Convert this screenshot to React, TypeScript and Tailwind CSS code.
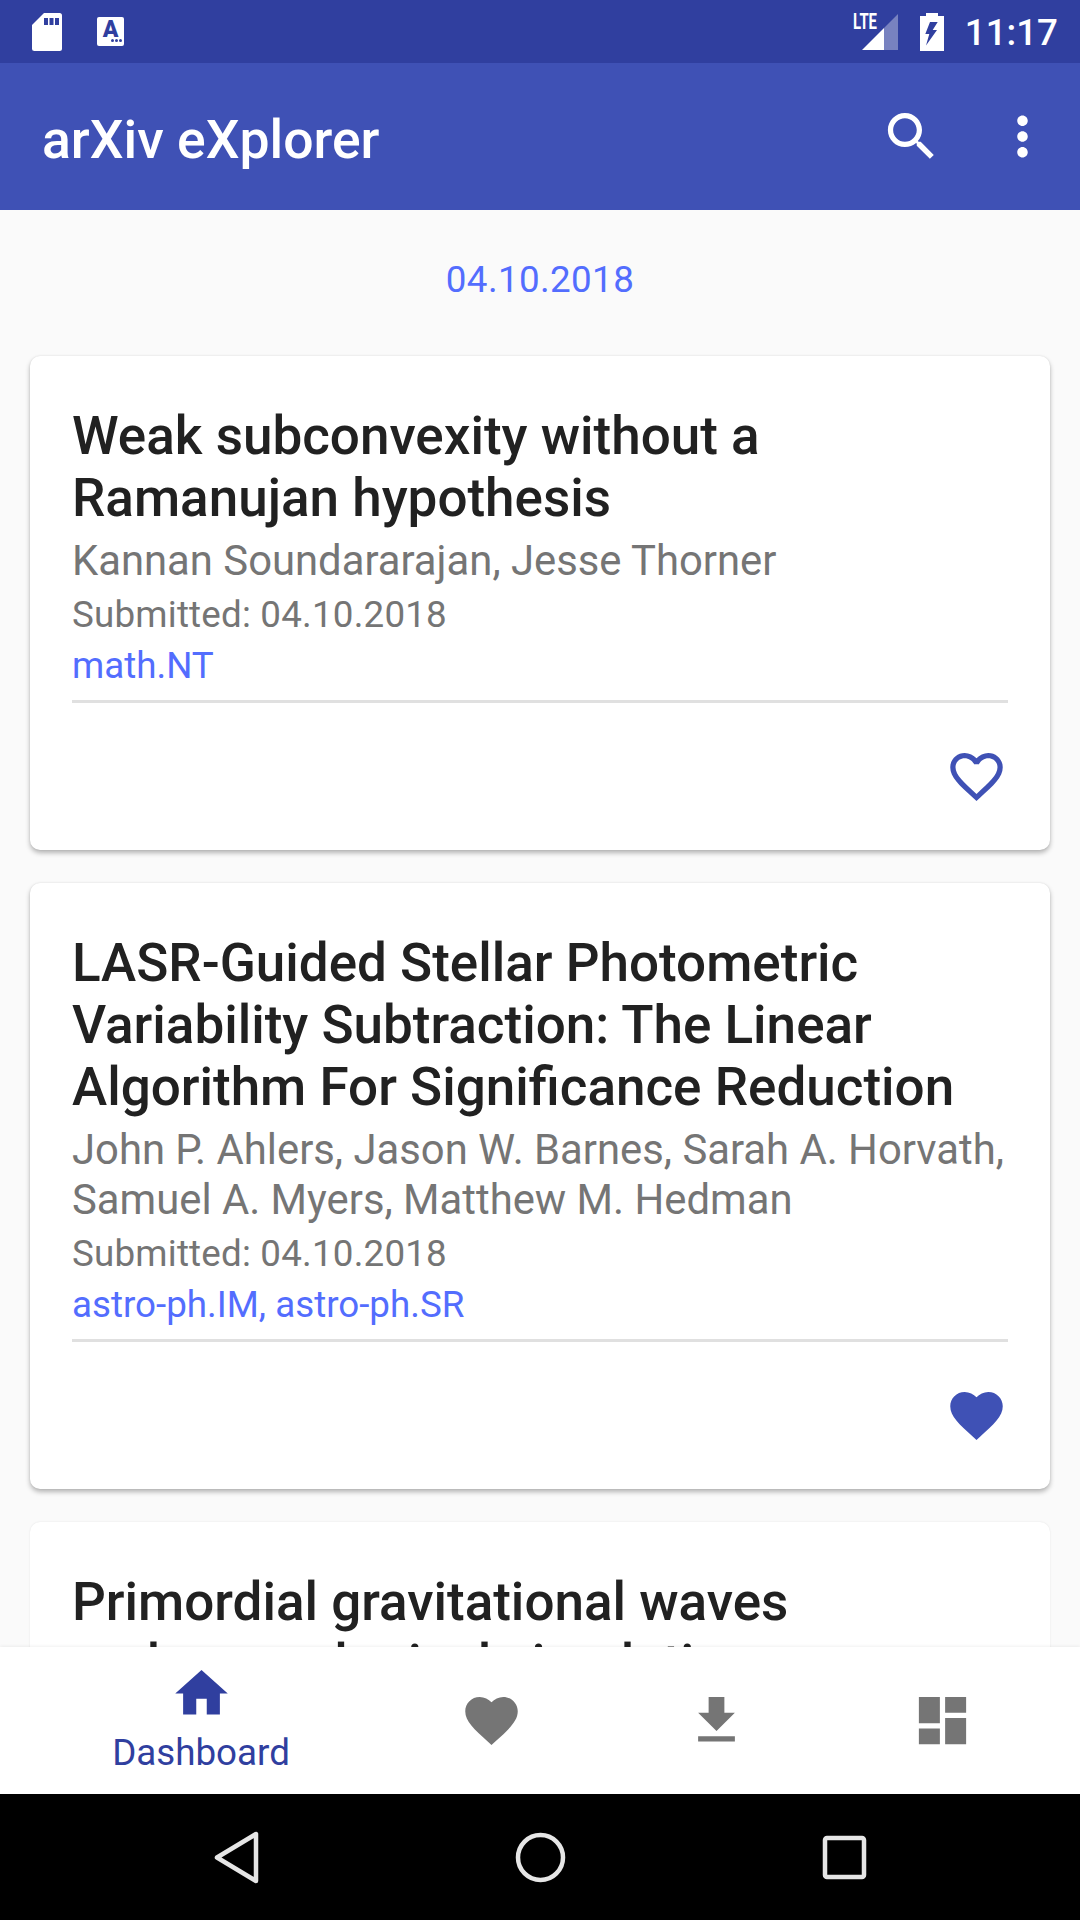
import { Fragment } from 'react';

const cards = [
  {
    title: ['Weak subconvexity without a', 'Ramanujan hypothesis'],
    authors: ['Kannan Soundararajan, Jesse Thorner'],
    categories: 'math.NT',
    liked: false,
  },
  {
    title: ['LASR-Guided Stellar Photometric', 'Variability Subtraction: The Linear', 'Algorithm For Significance Reduction'],
    authors: ['John P. Ahlers, Jason W. Barnes, Sarah A. Horvath,', 'Samuel A. Myers, Matthew M. Hedman'],
    categories: 'astro-ph.IM, astro-ph.SR',
    liked: true,
  },
];

function Icon({ d, className }: { d: string; className: string }) {
  return (
    <svg viewBox="0 0 24 24" className={className} fill="currentColor">
      <path d={d} />
    </svg>
  );
}

const heartFilled =
  'M12 21.35l-1.45-1.32C5.4 15.36 2 12.28 2 8.5 2 5.42 4.42 3 7.5 3c1.74 0 3.41.81 4.5 2.09C13.09 3.81 14.76 3 16.5 3 19.58 3 22 5.42 22 8.5c0 3.78-3.4 6.86-8.55 11.54L12 21.35z';
const heartOutline =
  'M16.5 3c-1.74 0-3.41.81-4.5 2.09C10.91 3.81 9.24 3 7.5 3 4.42 3 2 5.42 2 8.5c0 3.78 3.4 6.86 8.55 11.54L12 21.35l1.45-1.32C18.6 15.36 22 12.28 22 8.5 22 5.42 19.58 3 16.5 3zm-4.4 15.55l-.1.1-.1-.1C7.14 14.24 4 11.39 4 8.5 4 6.5 5.5 5 7.5 5c1.54 0 3.04.99 3.57 2.36h1.87C13.46 5.99 14.96 5 16.5 5c2 0 3.5 1.5 3.5 3.5 0 2.89-3.14 5.74-7.9 10.05z';

function StatusBar() {
  return (
    <div className="flex h-[63px] shrink-0 items-center bg-[#303f9f] pl-[32px] pr-[22px] text-white">
      <svg viewBox="0 0 30 38" className="h-[38px] w-[30px]">
        <path d="M12 0h15.5A2.5 2.5 0 0 1 30 2.5v33a2.5 2.5 0 0 1-2.5 2.5h-25A2.5 2.5 0 0 1 0 35.5V12z" fill="#fff" />
        <rect x="12" y="5" width="4" height="7" fill="#303f9f" />
        <rect x="17.5" y="5" width="4" height="7" fill="#303f9f" />
        <rect x="23" y="5" width="4" height="7" fill="#303f9f" />
      </svg>
      <div className="ml-[35px] flex h-[29px] w-[27px] flex-col items-center rounded-[2px] bg-white text-[#303f9f]">
        <span className="mt-[3px] text-[23px] leading-[19px] font-black">A</span>
        <span className="ml-[11px] flex gap-[1px]">
          <i className="h-[3px] w-[3px] rounded-full bg-[#303f9f]" />
          <i className="h-[3px] w-[3px] rounded-full bg-[#303f9f]" />
          <i className="h-[3px] w-[3px] rounded-full bg-[#303f9f]" />
        </span>
      </div>
      <svg viewBox="0 0 46 38" className="ml-auto h-[38px] w-[46px] overflow-visible">
        <text x="1" y="16" fontSize="22" fontWeight="700" fill="#fff" textLength="24" lengthAdjust="spacingAndGlyphs">
          LTE
        </text>
        <path d="M10 37 32 15v22z" fill="#fff" />
        <path d="M32 15 46 1v36H32z" fill="#fff" fillOpacity="0.35" />
      </svg>
      <svg viewBox="0 0 24 38" className="ml-[22px] h-[38px] w-[24px]">
        <path d="M6 0h12v3h6v35H0V3h6z" fill="#fff" />
        <path d="M10 9h7.7l-5 8H17L6 32.5 9.3 21H5.3z" fill="#303f9f" />
      </svg>
      <span className="mt-[4px] ml-[21px] text-[36.75px] leading-none font-medium">11:17</span>
    </div>
  );
}

function AppBar() {
  return (
    <div className="flex h-[147px] shrink-0 items-center bg-[#3f51b5] pl-[42px] text-white">
      <h1 className="mt-[6px] text-[53.5px] leading-none font-medium">arXiv eXplorer</h1>
      <Icon
        className="ml-auto h-[63px] w-[63px]"
        d="M15.5 14h-.79l-.28-.27C15.41 12.59 16 11.11 16 9.5 16 5.91 13.09 3 9.5 3S3 5.91 3 9.5 5.91 16 9.5 16c1.61 0 3.09-.59 4.23-1.57l.27.28v.79l5 4.99L20.49 19l-4.99-5zm-6 0C7.01 14 5 11.99 5 9.5S7.01 5 9.5 5 14 7.01 14 9.5 11.99 14 9.5 14z"
      />
      <Icon
        className="mr-[26px] ml-[48px] h-[63px] w-[63px]"
        d="M12 8c1.1 0 2-.9 2-2s-.9-2-2-2-2 .9-2 2 .9 2 2 2zm0 2c-1.1 0-2 .9-2 2s.9 2 2 2 2-.9 2-2-.9-2-2-2zm0 6c-1.1 0-2 .9-2 2s.9 2 2 2 2-.9 2-2-.9-2-2-2z"
      />
    </div>
  );
}

function PaperCard({ card }: { card: (typeof cards)[number] }) {
  return (
    <div className="mb-[33px] rounded-[10px] bg-white px-[42px] pt-[49px] pb-[42px] shadow-[0_3px_5px_rgba(0,0,0,0.28),0_0_2px_rgba(0,0,0,0.1)]">
      <h2 className="mb-[7px] text-[53px] leading-[62px] font-medium whitespace-nowrap text-[#212121]">
        {card.title.map((line) => (
          <Fragment key={line}>
            {line}
            <br />
          </Fragment>
        ))}
      </h2>
      <p className="text-[41.8px] leading-[50px] whitespace-nowrap text-[#757575]">
        {card.authors.map((line) => (
          <Fragment key={line}>
            {line}
            <br />
          </Fragment>
        ))}
      </p>
      <p className="mt-[4px] text-[36.75px] leading-[49px] tracking-[0.2px] text-[#757575]">Submitted: 04.10.2018</p>
      <p className="mt-[5px] text-[36.75px] leading-[43px] text-[#536dfe]">{card.categories}</p>
      <div className="mt-[13px] h-[3px] bg-[#e0e0e0]" />
      <div className="mt-[42px] flex justify-end">
        <Icon className="h-[63px] w-[63px] text-[#3f51b5]" d={card.liked ? heartFilled : heartOutline} />
      </div>
    </div>
  );
}

function BottomNav() {
  return (
    <div className="z-10 grid h-[147px] shrink-0 grid-cols-[356px_1fr_1fr_1fr] bg-white pr-[25px] pl-[23px] text-[#757575] shadow-[0_-1px_3px_rgba(0,0,0,0.06)]">
      <div className="flex flex-col items-center pt-[15px] text-[#303f9f]">
        <Icon className="h-[63px] w-[63px]" d="M10 20v-6h4v6h5v-8h3L12 3 2 12h3v8z" />
        <span className="mt-[6px] text-[36.75px] leading-[43px]">Dashboard</span>
      </div>
      <div className="flex items-center justify-center">
        <Icon className="h-[63px] w-[63px]" d={heartFilled} />
      </div>
      <div className="flex items-center justify-center">
        <Icon className="h-[63px] w-[63px]" d="M19 9h-4V3H9v6H5l7 7 7-7zM5 18v2h14v-2H5z" />
      </div>
      <div className="flex items-center justify-center">
        <Icon className="h-[63px] w-[63px]" d="M3 13h8V3H3v10zm0 8h8v-6H3v6zm10 0h8V11h-8v10zm0-18v6h8V3h-8z" />
      </div>
    </div>
  );
}

function SystemNav() {
  return (
    <div className="flex h-[126px] shrink-0 items-center justify-center gap-[241px] bg-black">
      <svg viewBox="0 0 63 63" className="h-[63px] w-[63px]" fill="none" stroke="#e6e6e6" strokeWidth="4.5" strokeLinejoin="round">
        <path d="M12 31.5 51 8v47z" />
      </svg>
      <svg viewBox="0 0 63 63" className="h-[63px] w-[63px]" fill="none" stroke="#e6e6e6" strokeWidth="4.5">
        <circle cx="31.5" cy="31.5" r="22.5" />
      </svg>
      <svg viewBox="0 0 63 63" className="h-[63px] w-[63px]" fill="none" stroke="#e6e6e6" strokeWidth="4.5" strokeLinejoin="round">
        <rect x="12" y="12" width="39" height="39" rx="2" />
      </svg>
    </div>
  );
}

export default function App() {
  return (
    <div className="flex h-[1920px] w-[1080px] flex-col overflow-hidden bg-[#fafafa] font-[Roboto,sans-serif]">
      <StatusBar />
      <AppBar />
      <main className="min-h-0 flex-1 overflow-hidden px-[30px]">
        <p className="pt-[43px] pb-[49px] text-center text-[36.75px] leading-[54px] tracking-[0.37px] text-[#536dfe]">04.10.2018</p>
        {cards.map((card) => (
          <PaperCard key={card.categories} card={card} />
        ))}
        <div className="rounded-[10px] bg-white px-[42px] pt-[49px] shadow-[0_0_2px_rgba(0,0,0,0.1)]">
          <h2 className="text-[53px] leading-[62px] font-medium whitespace-nowrap text-[#212121]">
            Primordial gravitational waves
            <br />
            and cosmological simulations
          </h2>
        </div>
      </main>
      <BottomNav />
      <SystemNav />
    </div>
  );
}
